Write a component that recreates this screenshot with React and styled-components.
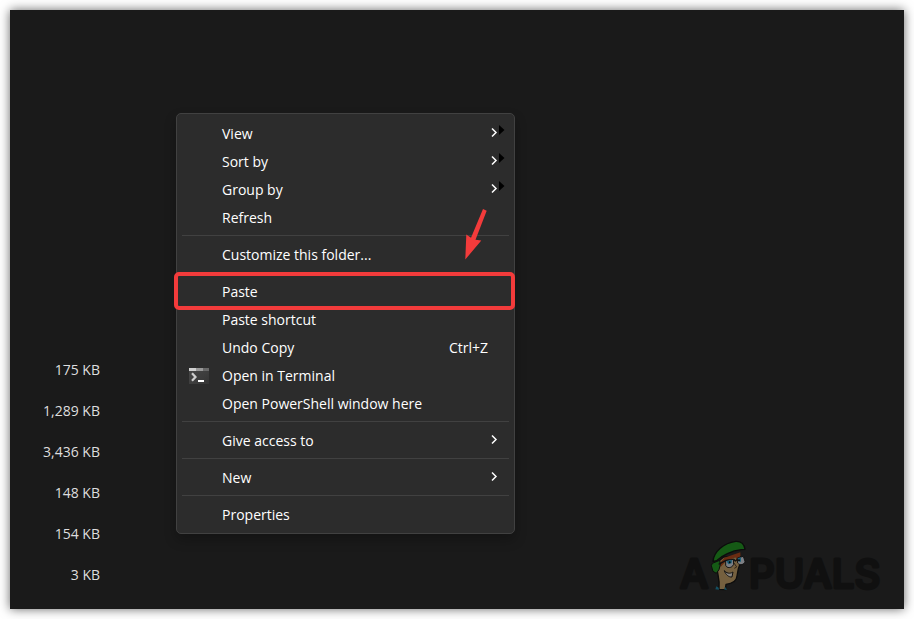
import styled, { createGlobalStyle } from "styled-components";

const GlobalStyle = createGlobalStyle`
  * {
    box-sizing: border-box;
  }

  body {
    margin: 0;
    background: #ffffff;
    font-family: "Open Sans", "Noto Sans", sans-serif;
  }
`;

const Page = styled.div`
  display: flex;
  min-height: 100vh;
  padding: 10px;
`;

const Desktop = styled.main`
  position: relative;
  display: flex;
  flex: 1;
  align-items: flex-end;
  justify-content: space-between;
  padding: 0 12px 10px 0;
  background: #1a1a1a;
  box-shadow: 0 0 10px rgba(0, 0, 0, 0.6);
`;

const SizeList = styled.ul`
  width: 90px;
  margin: 0 0 4px;
  padding: 0;
  list-style: none;
`;

const SizeItem = styled.li`
  color: #dedede;
  font-size: 14px;
  line-height: 41px;
  text-align: right;
`;

const Menu = styled.div`
  position: absolute;
  top: 103px;
  left: 166px;
  width: 339px;
  padding: 5px 4px;
  border: 1px solid #414141;
  border-radius: 5px;
  background: #2c2c2c;
  box-shadow: 0 6px 12px rgba(0, 0, 0, 0.25);
`;

const MenuItem = styled.button`
  position: relative;
  display: flex;
  align-items: center;
  width: 100%;
  height: 28px;
  padding: 2px 5px 0 8px;
  border: 0;
  background: transparent;
  color: #ffffff;
  font-family: inherit;
  font-size: 14px;
  line-height: 26px;
  text-align: left;
`;

const IconSlot = styled.span`
  display: flex;
  flex: none;
  width: 33px;
`;

const Label = styled.span`
  flex: 1;
`;

const Shortcut = styled.span`
  padding-right: 17px;
`;

const Separator = styled.hr`
  height: 1px;
  margin: 4px 1px;
  border: 0;
  background: #414141;
`;

const Highlight = styled.span`
  position: absolute;
  inset: -5px -5px -5px -7px;
  border: 4px solid #f33b3b;
  border-radius: 5px;
  pointer-events: none;
`;

const Arrow = styled.svg`
  position: absolute;
  top: 195px;
  left: 450px;
  pointer-events: none;
`;

const rows = [
  { label: "View", submenu: true, marker: true },
  { label: "Sort by", submenu: true, marker: true },
  { label: "Group by", submenu: true, marker: true },
  { label: "Refresh" },
  null,
  { label: "Customize this folder..." },
  null,
  { label: "Paste", highlighted: true },
  { label: "Paste shortcut" },
  { label: "Undo Copy", shortcut: "Ctrl+Z" },
  { label: "Open in Terminal", icon: true },
  { label: "Open PowerShell window here" },
  null,
  { label: "Give access to", submenu: true },
  null,
  { label: "New", submenu: true },
  null,
  { label: "Properties" },
];

const sizes = ["175 KB", "1,289 KB", "3,436 KB", "148 KB", "154 KB", "3 KB"];

function TerminalIcon() {
  return (
    <svg width="20" height="16" viewBox="0 0 20 16" aria-hidden="true">
      <defs>
        <linearGradient id="terminal" x1="0" y1="0" x2="1" y2="1">
          <stop offset="0" stopColor="#484848" />
          <stop offset="1" stopColor="#353535" />
        </linearGradient>
      </defs>
      <path d="M0 0H20V16H0Z" fill="url(#terminal)" />
      <path d="M0 0H7V3H0Z" fill="#d0d0d0" />
      <path d="M7 0H14V3H7Z" fill="#999999" />
      <path d="M14 0H20V3H14Z" fill="#686868" />
      <path d="M3 5.2L6.5 9L3 12.8" fill="none" stroke="#cfcfcf" strokeWidth="2.2" />
      <path d="M9 12H15V14H9Z" fill="#ffffff" />
    </svg>
  );
}

function SubmenuIcon({ marker }) {
  return (
    <svg width="15" height="18" viewBox="0 0 15 18" aria-hidden="true">
      <path d="M2 3.5L6 7.5L2 11.5" fill="none" stroke="#ffffff" strokeWidth="1.5" />
      {marker && <path d="M9 0L14.5 5L9 10Z" fill="#000000" />}
    </svg>
  );
}

function BrandLogo() {
  return (
    <svg width="216" height="64" viewBox="0 0 216 64" role="img" aria-label="APPUALS">
      <g
        fill="#101010"
        stroke="#101010"
        strokeWidth="3"
        strokeLinejoin="round"
        fontFamily="Inter, sans-serif"
        fontSize="40"
        fontWeight="500"
      >
        <text x="4" y="53">A</text>
        <text x="73" y="53">PUALS</text>
      </g>
      <g transform="translate(25 0) scale(0.3333)" strokeLinejoin="round">
        <path
          d="M48 101C49 118 57 128 54 163L73 164L75 148C91 146 107 138 108 123L112 101L119 82L112 64L68 66L42 88Z"
          fill="#75603f"
          stroke="#0c0c0c"
          strokeWidth="4"
        />
        <path d="M70 68L118 52L119 72L108 80L104 66L72 82L59 96L57 84Z" fill="#6b2c12" />
        <path d="M34 85L56 76L58 89L54 104L46 115L36 109L31 92Z" fill="#155a15" stroke="#0c0c0c" strokeWidth="3" />
        <path
          d="M36 79C39 50 68 24 104 19C123 18 130 29 132 43L121 44C93 47 62 61 47 77Z"
          fill="#155a15"
          stroke="#0c0c0c"
          strokeWidth="4"
        />
        <path d="M53 88L75 76L98 73L103 78L119 66L130 67" fill="none" stroke="#111111" strokeWidth="4" />
        <path d="M74 77L97 73L98 88C92 101 77 100 74 91Z" fill="#7d7f84" stroke="#111111" strokeWidth="3" />
        <path d="M109 69L127 64L132 79C130 90 116 92 110 84Z" fill="#7d7f84" stroke="#111111" strokeWidth="3" />
        <path d="M76 78L93 75L92 85L82 88Z" fill="#1a6079" />
        <path d="M110 70L120 67L120 80L113 80Z" fill="#1a6079" />
        <circle cx="86" cy="82" r="3" fill="#090909" />
        <circle cx="114" cy="76" r="3" fill="#090909" />
        <path d="M99 84L107 96L100 100" fill="none" stroke="#302419" strokeWidth="3" />
        <path d="M70 107C81 119 91 114 96 111L93 126C83 127 74 119 70 107Z" fill="#88847f" stroke="#111111" strokeWidth="3" />
        <path d="M43 163L46 154L53 158L54 164Z" fill="#145062" />
        <path d="M70 164L72 155L78 164Z" fill="#145062" />
      </g>
    </svg>
  );
}

function ContextMenu() {
  return (
    <Menu role="menu" aria-label="Folder options">
      {rows.map((row, index) => {
        if (!row) {
          return <Separator key={index} />;
        }

        return (
          <MenuItem key={row.label} type="button" role="menuitem">
            <IconSlot>{row.icon && <TerminalIcon />}</IconSlot>
            <Label>{row.label}</Label>
            {row.shortcut && <Shortcut>{row.shortcut}</Shortcut>}
            {row.submenu && <SubmenuIcon marker={row.marker} />}
            {row.highlighted && <Highlight />}
          </MenuItem>
        );
      })}
    </Menu>
  );
}

export default function App() {
  return (
    <>
      <GlobalStyle />
      <Page>
        <Desktop>
          <SizeList>
            {sizes.map((size) => (
              <SizeItem key={size}>{size}</SizeItem>
            ))}
          </SizeList>
          <BrandLogo />
          <ContextMenu />
          <Arrow width="32" height="60" viewBox="0 0 32 60" aria-hidden="true">
            <path d="M23 4L26.7 5.7L15.5 34.7L21.3 35.5L5.3 54.5L6.3 29.5L11 32.7Z" fill="#f33b3b" />
          </Arrow>
        </Desktop>
      </Page>
    </>
  );
}
